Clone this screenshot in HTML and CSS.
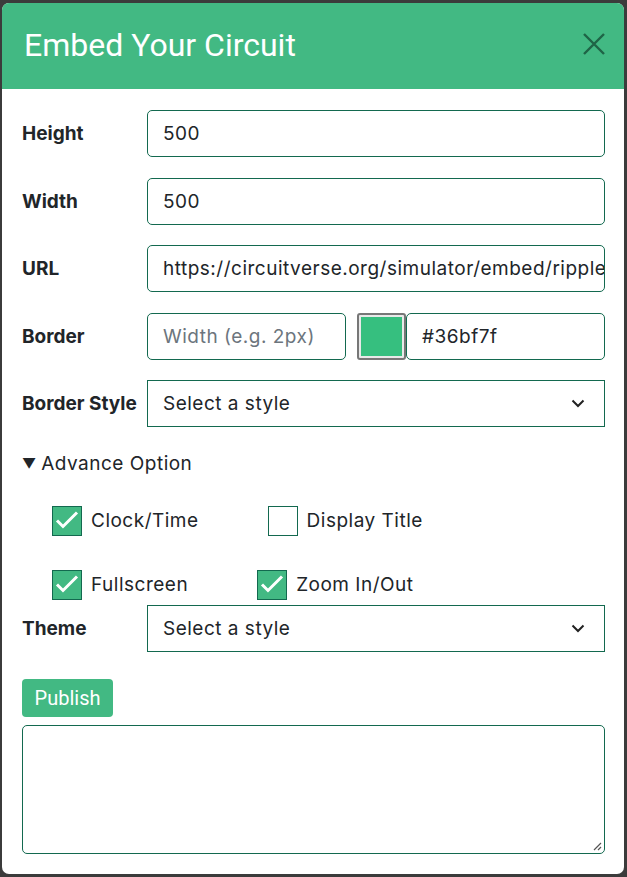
FILE: index.html
```html
<!DOCTYPE html>
<html>
<head>
<meta charset="utf-8">
<link rel="stylesheet" href="styles.css">
</head>
<body>
<div class="modal">
  <div class="modal-header">
    <h1 class="title">Embed Your Circuit</h1>
    <svg class="close" width="22" height="22" viewBox="0 0 22 22"><path d="M1 1L21 21M21 1L1 21" stroke="#1f6446" stroke-width="2.4" fill="none"/></svg>
  </div>
  <div class="modal-body">
    <div class="row"><label class="lbl">Height</label><div class="field">500</div></div>
    <div class="row"><label class="lbl">Width</label><div class="field">500</div></div>
    <div class="row"><label class="lbl">URL</label><div class="field clip">https://circuitverse.org/simulator/embed/ripple-carry-adder</div></div>
    <div class="row"><label class="lbl">Border</label>
      <div class="border-group">
        <div class="field half placeholder">Width (e.g. 2px)</div>
        <div class="swatch"><div class="swatch-fill"></div></div>
        <div class="field hex">#36bf7f</div>
      </div>
    </div>
    <div class="row"><label class="lbl">Border Style</label><div class="field select">Select a style<svg class="chev" width="14" height="9" viewBox="0 0 14 9"><path d="M1.5 1.5L7 7L12.5 1.5" stroke="#222" stroke-width="2" fill="none"/></svg></div></div>
    <div class="summary"><span class="tri">▼</span>Advance Option</div>
    <div class="checks">
      <div class="check-row">
        <div class="check"><span class="box on"><svg width="28" height="28" viewBox="0 0 28 28"><path d="M4 13.5L10 19.5L24 5.5" stroke="#fff" stroke-width="3" fill="none"/></svg></span>Clock/Time</div>
        <div class="check"><span class="box"></span>Display Title</div>
      </div>
      <div class="check-row second">
        <div class="check"><span class="box on"><svg width="28" height="28" viewBox="0 0 28 28"><path d="M4 13.5L10 19.5L24 5.5" stroke="#fff" stroke-width="3" fill="none"/></svg></span>Fullscreen</div>
        <div class="check"><span class="box on"><svg width="28" height="28" viewBox="0 0 28 28"><path d="M4 13.5L10 19.5L24 5.5" stroke="#fff" stroke-width="3" fill="none"/></svg></span>Zoom In/Out</div>
      </div>
    </div>
    <div class="row theme"><label class="lbl">Theme</label><div class="field select">Select a style<svg class="chev" width="14" height="9" viewBox="0 0 14 9"><path d="M1.5 1.5L7 7L12.5 1.5" stroke="#222" stroke-width="2" fill="none"/></svg></div></div>
    <button class="publish">Publish</button>
    <div class="textarea"><svg class="grip" width="10" height="10" viewBox="0 0 10 10"><path d="M9 2L2 9M9 6L6 9" stroke="#555" stroke-width="1.2"/></svg></div>
  </div>
</div>
</body>
</html>
```

FILE: styles.css
```css
html, body {
  margin: 0;
  padding: 0;
  background: #3b3b3b;
  width: 627px;
  height: 877px;
  overflow: hidden;
}
body {
  padding: 3px 3px 3px 2px;
  box-sizing: border-box;
}
.modal {
  width: 622px;
  height: 871px;
  background: #fff;
  border-radius: 7px;
  overflow: hidden;
  font-family: Inter, "Noto Sans", sans-serif;
  color: #212529;
}
.modal-header {
  height: 86px;
  background: #42b983;
  display: flex;
  align-items: center;
  justify-content: space-between;
  padding: 0 19px 0 22px;
  box-sizing: border-box;
}
.title {
  margin: 0;
  font-family: Roboto, sans-serif;
  font-weight: 400;
  font-size: 32px;
  color: #fff;
  margin-top: -2px;
}
.close { display: block; margin-top: -4px; }
.modal-body {
  padding: 21px 19px 0 20px;
}
.row {
  display: flex;
  align-items: center;
  height: 47px;
  margin-bottom: 20.6px;
}
.lbl {
  width: 125px;
  font-weight: 700;
  font-size: 19px;
  color: #212529;
}
.field {
  flex: 1;
  height: 47px;
  box-sizing: border-box;
  border: 1px solid #13694f;
  border-radius: 5px;
  padding: 0 15px;
  display: flex;
  align-items: center;
  font-size: 19px;
  letter-spacing: 0.5px;
  color: #212529;
  white-space: nowrap;
  overflow: hidden;
}
.border-group {
  flex: 1;
  display: flex;
  align-items: center;
}
.field.half { flex: 0 0 199px; }
.placeholder { color: #6c757d; }
.swatch {
  width: 49px;
  height: 47px;
  box-sizing: border-box;
  margin-left: 11px;
  border: 2px solid #777;
  border-radius: 3px;
  background: #e9e9e9;
  padding: 2px;
}
.swatch-fill {
  width: 100%;
  height: 100%;
  background: #36bf7f;
}
.field.hex { flex: 1; margin-left: 0; }
.field.select {
  border-radius: 0;
  justify-content: space-between;
  padding-right: 19px;
}
.summary {
  font-size: 19px;
  letter-spacing: 0.5px;
  margin-top: 24.6px;
  height: 24px;
  display: flex;
  align-items: center;
  color: #212529;
}
.tri { font-size: 14px; margin-right: 5px; letter-spacing: 0; }
.checks { padding-left: 30px; margin-top: 30px; }
.check-row { display: flex; gap: 69px; }
.check-row.second { margin-top: 34px; }
.check {
  display: flex;
  align-items: center;
  font-size: 19px;
  letter-spacing: 0.5px;
  gap: 9px;
}
.box {
  width: 30px;
  height: 30px;
  box-sizing: border-box;
  border: 1px solid #13694f;
  display: flex;
  align-items: center;
  justify-content: center;
}
.box svg { display: block; }
.box.on { background: #42b983; }
.row.theme { margin-top: 5px; margin-bottom: 27px; }
.publish {
  display: block;
  background: #42b983;
  color: #fff;
  border: none;
  border-radius: 4px;
  font-family: Roboto, sans-serif;
  font-size: 20px;
  height: 38px;
  width: 91px;
  padding: 0;
}
.textarea {
  margin-top: 8px;
  height: 129px;
  border: 1px solid #13694f;
  border-radius: 5px;
  box-sizing: border-box;
  position: relative;
}
.grip { position: absolute; right: 2px; bottom: 2px; }
```
